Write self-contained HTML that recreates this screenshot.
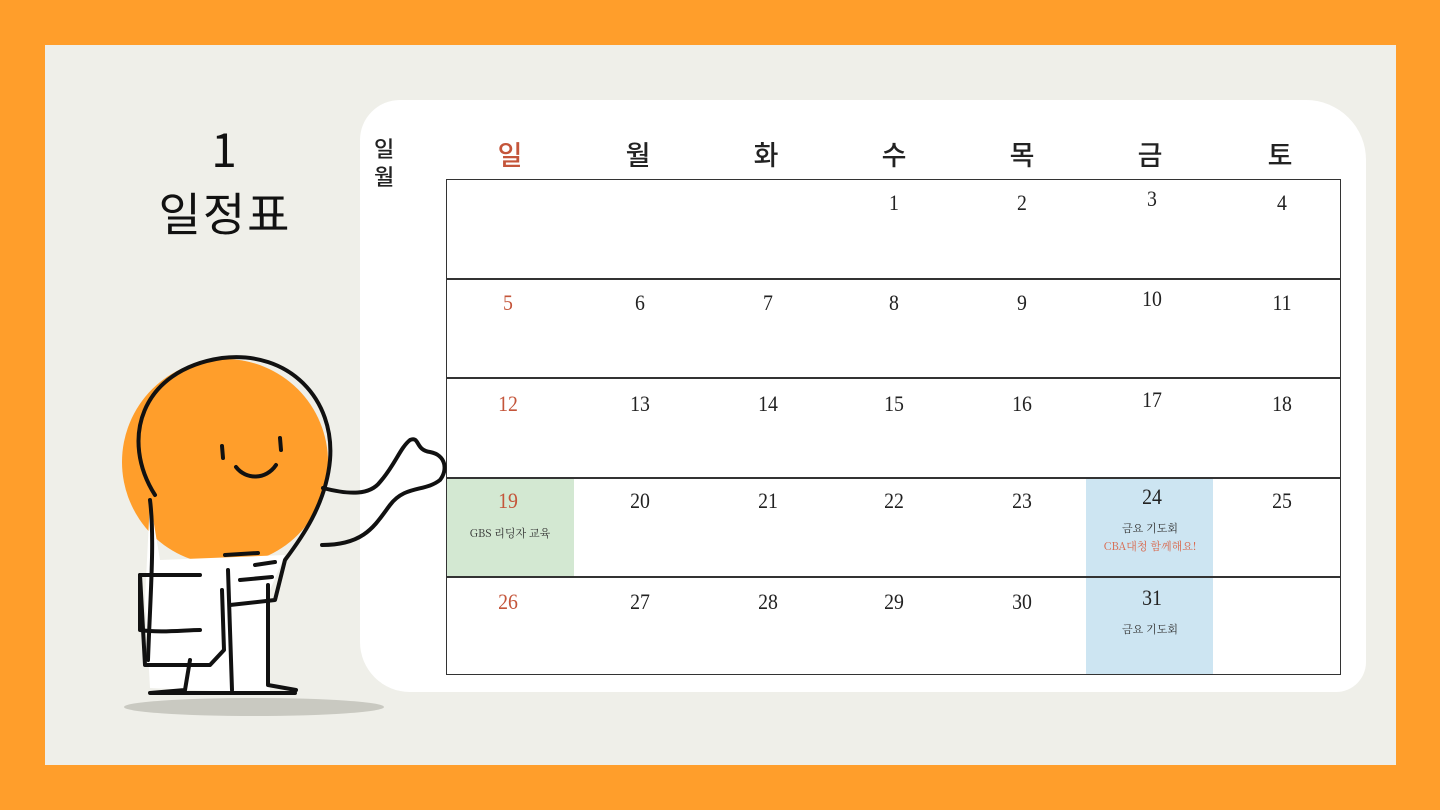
<!DOCTYPE html>
<html><head><meta charset="utf-8"><style>
body{margin:0;width:1440px;height:810px;background:#FF9E2B;position:relative;overflow:hidden;font-family:"Liberation Serif","Noto Serif CJK SC",serif}
.bg{position:absolute;left:45px;top:45px;width:1351px;height:720px;background:#EFEFE9}
.blob{position:absolute;left:360px;top:100px;width:1006px;height:592px;background:#fff;border-radius:40px 60px 30px 50px}
.t{position:absolute;left:446px;top:179px;width:895px;height:496px;border:1.5px solid #333;box-sizing:border-box}
.h{position:absolute;top:134px;font-size:27px;font-weight:500;width:128px;text-align:center;font-family:"Noto Sans CJK KR",sans-serif;color:#222}
.n{position:absolute;width:128px;text-align:center;font-size:22px;color:#222;transform:scaleX(.9)}
.r{color:#C4553A}
.hl{position:absolute;height:1.5px;background:#333;left:446px;width:895px}
.s{position:absolute;font-size:11px;width:128px;text-align:center;font-family:"Noto Serif CJK SC",serif;color:#333}
</style></head><body>
<div class="bg"></div>
<div class="blob"></div>
<div style="position:absolute;left:140px;top:116px;width:170px;text-align:center;font:400 46px 'Noto Sans CJK KR',sans-serif;letter-spacing:2px;line-height:64px;color:#111">1<br>일정표</div>
<div style="position:absolute;left:374px;top:134px;font:500 22px 'Noto Sans CJK KR',sans-serif;line-height:28px;color:#222">일<br>월</div>
<div class="h r" style="left:446px">일</div><div class="h" style="left:574px">월</div><div class="h" style="left:702px">화</div><div class="h" style="left:830px">수</div><div class="h" style="left:958px">목</div><div class="h" style="left:1086px">금</div><div class="h" style="left:1216px">토</div>
<div style="position:absolute;left:447px;top:478px;width:127px;height:98px;background:#D3E8D2"></div>
<div style="position:absolute;left:1086px;top:478px;width:127px;height:197px;background:#CDE5F2"></div>
<div class="t"></div>
<div class="hl" style="top:278px"></div><div class="hl" style="top:377px"></div><div class="hl" style="top:477px"></div><div class="hl" style="top:576px"></div>
<div class="n" style="left:830px;top:190px">1</div><div class="n" style="left:958px;top:190px">2</div><div class="n" style="left:1088px;top:186px">3</div><div class="n" style="left:1218px;top:190px">4</div>
<div class="n r" style="left:444px;top:290px">5</div><div class="n" style="left:576px;top:290px">6</div><div class="n" style="left:704px;top:290px">7</div><div class="n" style="left:830px;top:290px">8</div><div class="n" style="left:958px;top:290px">9</div><div class="n" style="left:1088px;top:286px">10</div><div class="n" style="left:1218px;top:290px">11</div>
<div class="n r" style="left:444px;top:391px">12</div><div class="n" style="left:576px;top:391px">13</div><div class="n" style="left:704px;top:391px">14</div><div class="n" style="left:830px;top:391px">15</div><div class="n" style="left:958px;top:391px">16</div><div class="n" style="left:1088px;top:387px">17</div><div class="n" style="left:1218px;top:391px">18</div>
<div class="n r" style="left:444px;top:488px">19</div><div class="n" style="left:576px;top:488px">20</div><div class="n" style="left:704px;top:488px">21</div><div class="n" style="left:830px;top:488px">22</div><div class="n" style="left:958px;top:488px">23</div><div class="n" style="left:1088px;top:484px">24</div><div class="n" style="left:1218px;top:488px">25</div>
<div class="n r" style="left:444px;top:589px">26</div><div class="n" style="left:576px;top:589px">27</div><div class="n" style="left:704px;top:589px">28</div><div class="n" style="left:830px;top:589px">29</div><div class="n" style="left:958px;top:589px">30</div><div class="n" style="left:1088px;top:585px">31</div>
<div class="s" style="left:446px;top:525px">GBS 리딩자 교육</div>
<div class="s" style="left:1086px;top:520px">금요 기도회</div>
<div class="s r" style="left:1086px;top:538px;color:#D9664A">CBA대청 함께해요!</div>
<div class="s" style="left:1086px;top:621px">금요 기도회</div>
<svg style="position:absolute;left:0;top:0" width="1440" height="810" fill="none" stroke="#111" stroke-width="4" stroke-linecap="round" stroke-linejoin="round">
<ellipse cx="254" cy="707" rx="130" ry="9" fill="#C9C9C1" stroke="none"/>
<circle cx="225" cy="462" r="103" fill="#FF9E2B" stroke="none"/>
<path d="M150 500 L145 600 L150 688 L235 692 L270 692 L270 590 L285 555 L160 560Z" fill="#fff" stroke="none"/>
<path d="M222 590 L224 650 L210 665 L145 665 L140 575 L200 575" fill="none"/>
<path d="M150 500 C155 540,150 600,148 660 M190 660 L185 690 L150 693 L295 693 M228 570 L232 690 M268 585 L268 685 L296 690"/>
<path d="M140 575 L140 630 C160 633,185 630,200 630" />
<path d="M155 495 C120 440,140 370,222 358 C290 350,335 400,330 460 C326 505,300 540,285 560 L275 600 L230 605"/>
<path d="M225 555 L258 553 M255 565 L275 562 M240 580 L272 577"/>
<path d="M222 446 L223 458 M280 438 L281 450 M236 467 C246 480,266 480,276 465"/>
<path d="M323 488 C350 495,370 495,380 482 C395 465,400 448,410 440 C420 436,415 450,430 452 C446 455,448 470,440 480 C425 492,405 485,390 505 C375 525,365 545,322 545"/>
</svg>
</body></html>
